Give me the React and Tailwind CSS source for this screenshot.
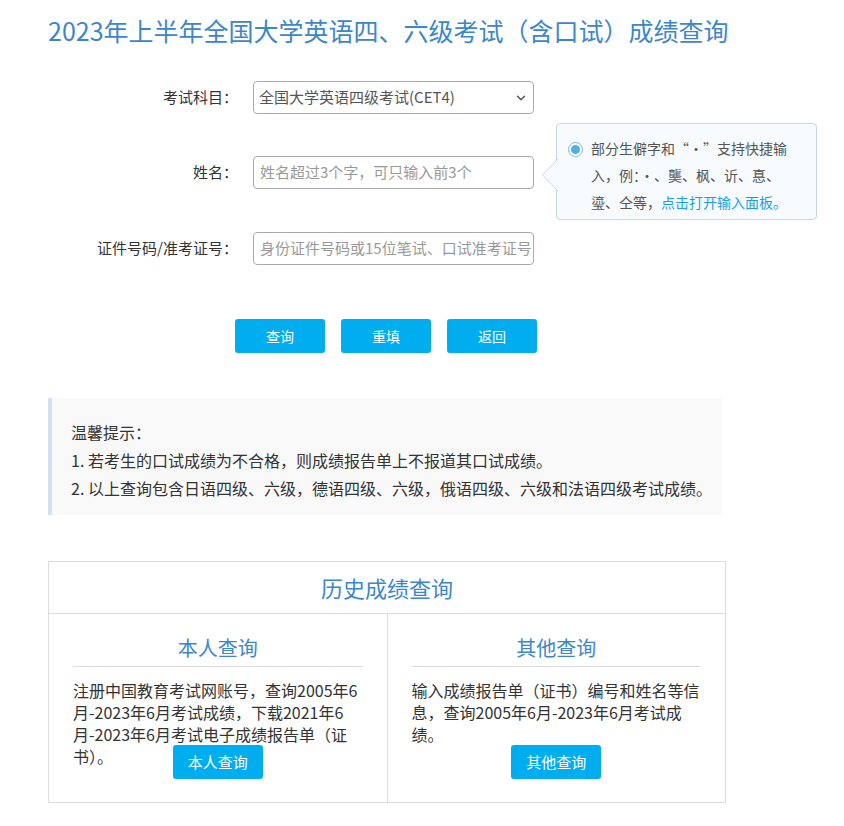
import React from "react";
import { ChevronDown } from "lucide-react";

const FONT = "font-['Noto_Sans_CJK_SC','Noto_Sans',sans-serif]";

function FormRow({ label, children }) {
  return (
    <div className="flex items-center h-[33px]">
      <div className="w-[190px] text-right text-[15px] text-[#333]">{label}</div>
      <div className="ml-[15px] relative">{children}</div>
    </div>
  );
}

function Tooltip() {
  // hint bubble beside the name field
  return (
    <div className="absolute left-[303px] top-[-33px] w-[261px] h-[97px] rounded-[4px] border border-[#c5d7ec] bg-[#f7fbfe]">
      <svg className="absolute left-[-16px] top-[34px]" width="17" height="34" viewBox="0 0 17 34">
        <path d="M17 1 L1.5 17 L17 33" fill="#f7fbfe" stroke="#c5d7ec" strokeWidth="1" />
      </svg>
      <div className="flex pt-[11px] pl-[11px]">
        <div className="mt-[7px] w-[15px] h-[15px] rounded-full border border-[#72bde3] bg-white flex items-center justify-center shrink-0">
          <div className="w-[9px] h-[9px] rounded-full bg-[#55aedb]" />
        </div>
        <p className="ml-[8px] text-[14px] leading-[27px] text-[#555]">
          部分生僻字和“·”支持快捷输
          <br />
          入，例：·、龑、枫、䜣、惪、
          <br />
          瑬、仝等，<span className="text-[#1a9fe6]">点击打开输入面板。</span>
        </p>
      </div>
    </div>
  );
}

function QueryColumn({ title, text, button, border }) {
  return (
    <div className={"flex-1 px-[24px] pt-[20px] pb-[23px] " + (border ? "border-r border-[#ddd]" : "")}>
      <h3 className="text-center text-[20px] leading-[28px] text-[#3c87c9] pb-[4px] border-b border-[#ddd]">{title}</h3>
      <p className="mt-[12px] h-[66px] text-[16px] leading-[22px] text-[#333]">{text}</p>
      <div className="flex justify-center">
        <button className="relative w-[90px] h-[34px] rounded-[3px] bg-[#00aeef] text-white text-[15px]">{button}</button>
      </div>
    </div>
  );
}

export default function App() {
  return (
    <div className={"w-[844px] min-h-[826px] bg-white " + FONT}>
      <div className="pl-[48px] pt-[12px] pb-[22px]">
        <h1 className="text-[25px] leading-[36px] text-[#3c87c9] whitespace-nowrap">
          2023年上半年全国大学英语四、六级考试（含口试）成绩查询
        </h1>

        <div className="mt-[33px]">
          <FormRow label="考试科目：">
            <div className="w-[281px] h-[33px] rounded-[4px] border border-[#aaa] flex items-center justify-between pl-[5px] pr-[5px] text-[15px] text-[#555]">
              <span>全国大学英语四级考试(CET4)</span>
              <ChevronDown size={14} strokeWidth={2.5} />
            </div>
          </FormRow>
          <div className="mt-[42px]">
            <FormRow label="姓名：">
              <div className="w-[281px] h-[33px] rounded-[4px] border border-[#aaa] flex items-center pl-[6px] text-[15px] text-[#999]">
                姓名超过3个字，可只输入前3个
              </div>
              <Tooltip />
            </FormRow>
          </div>
          <div className="mt-[43px]">
            <FormRow label="证件号码/准考证号：">
              <div className="w-[281px] h-[33px] rounded-[4px] border border-[#aaa] flex items-center pl-[6px] text-[15px] text-[#999] overflow-hidden whitespace-nowrap">
                身份证件号码或15位笔试、口试准考证号
              </div>
            </FormRow>
          </div>
        </div>

        <div className="mt-[54px] ml-[187px] flex gap-[16px]">
          {["查询", "重填", "返回"].map((t) => (
            <button key={t} className="w-[90px] h-[34px] rounded-[3px] bg-[#00aeef] text-white text-[14px]">
              {t}
            </button>
          ))}
        </div>

        <div className="mt-[45px] w-[674px] border-l-4 border-[#d3e2f2] bg-[#f9f9f9] pl-[19px] pt-[20px] pb-[13px] text-[16px] leading-[28px] text-[#333]">
          <p>温馨提示：</p>
          <p>1. 若考生的口试成绩为不合格，则成绩报告单上不报道其口试成绩。</p>
          <p>2. 以上查询包含日语四级、六级，德语四级、六级，俄语四级、六级和法语四级考试成绩。</p>
        </div>

        <div className="mt-[46px] w-[678px] border border-[#ddd]">
          <div className="h-[52px] flex items-center justify-center border-b border-[#ddd] text-[22px] text-[#3c87c9]">
            历史成绩查询
          </div>
          <div className="flex">
            <QueryColumn
              border
              title="本人查询"
              text="注册中国教育考试网账号，查询2005年6月-2023年6月考试成绩，下载2021年6月-2023年6月考试电子成绩报告单（证书）。"
              button="本人查询"
            />
            <QueryColumn
              title="其他查询"
              text="输入成绩报告单（证书）编号和姓名等信息，查询2005年6月-2023年6月考试成绩。"
              button="其他查询"
            />
          </div>
        </div>
      </div>
    </div>
  );
}
